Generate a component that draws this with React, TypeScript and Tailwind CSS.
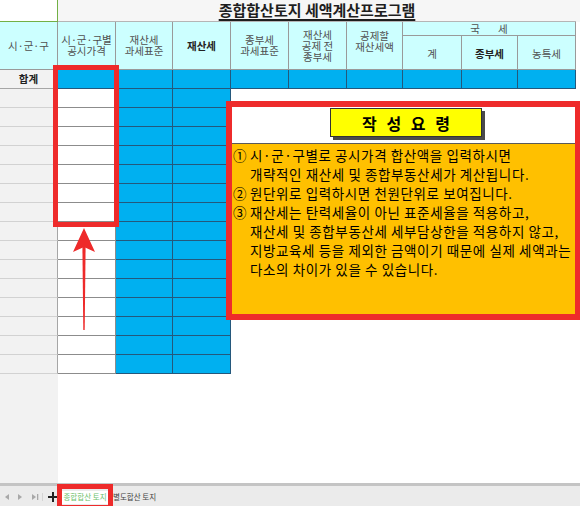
import React from "react";

// 열 너비 (A..J) — 엑셀 시트 그대로
const GRID = "grid grid-cols-[58px_58px_57px_58px_58px_58px_56px_59px_56px_58px_4px]";

const headCell =
  "flex flex-col items-center justify-center border-r border-b border-[#9a9a9a] bg-[#ccffff] text-center";

const GUIDE: [num: string, lines: string[]][] = [
  ["①", ["시·군·구별로 공시가격 합산액을 입력하시면", "개략적인 재산세 및 종합부동산세가 계산됩니다."]],
  ["②", ["원단위로 입력하시면 천원단위로 보여집니다."]],
  [
    "③",
    [
      "재산세는 탄력세율이 아닌 표준세율을 적용하고,",
      "재산세 및 종합부동산세 세부담상한을 적용하지 않고,",
      "지방교육세 등을 제외한 금액이기 때문에 실제 세액과는",
      "다소의 차이가 있을 수 있습니다.",
    ],
  ],
];

/** 시트 머리글 (2단) */
function SheetHeader() {
  return (
    <div className={`${GRID} grid-rows-[14px_34px] text-[10.5px] leading-[11px] text-[#505050]`}>
      <div className={`${headCell} row-span-2 bg-[#c7f1f1]`}>시·군·구</div>
      <div className={`${headCell} row-span-2 pb-[2px]`}>
        <span>시·군·구별</span>
        <span>공시가격</span>
      </div>
      <div className={`${headCell} row-span-2 pb-[2px]`}>
        <span>재산세</span>
        <span>과세표준</span>
      </div>
      <div className={`${headCell} row-span-2 font-bold text-[#222]`}>재산세</div>
      <div className={`${headCell} row-span-2 pb-[2px]`}>
        <span>종부세</span>
        <span>과세표준</span>
      </div>
      <div className={`${headCell} row-span-2`}>
        <span>재산세</span>
        <span>공제 전</span>
        <span>종부세</span>
      </div>
      <div className={`${headCell} row-span-2 justify-start pt-[8px]`}>
        <span>공제할</span>
        <span>재산세액</span>
      </div>
      <div className={`${headCell} col-span-3 flex-row gap-[18px]`}>
        <span>국</span>
        <span>세</span>
      </div>
      <div className="row-span-2" />
      <div className={`${headCell} pt-[2px]`}>계</div>
      <div className={`${headCell} pt-[2px] font-bold text-[#222]`}>종부세</div>
      <div className={`${headCell} pt-[2px]`}>농특세</div>
    </div>
  );
}

function SumRow() {
  return (
    <div className={`${GRID} h-[19px]`}>
      <div className="flex items-center justify-center border-r border-b border-[#a6a6a6] bg-[#f2f2f2] text-[10.5px] font-bold text-[#222]">
        합계
      </div>
      {Array.from({ length: 9 }, (_, i) => (
        <div key={i} className="border-r border-b border-[#24587c] bg-[#00b0f0]" />
      ))}
      <div />
    </div>
  );
}

function DataRow() {
  return (
    <div className={`${GRID} h-[19px]`}>
      <div className="border-r border-b border-r-[#a6a6a6] border-b-[#d2d2d2] bg-[#f2f2f2]" />
      <div className="border-r border-b border-[#8c8c8c] bg-white" />
      <div className="border-r border-b border-[#24587c] bg-[#00b0f0]" />
      <div className="border-r border-b border-[#24587c] bg-[#00b0f0]" />
    </div>
  );
}

/** 작성요령 안내 상자 */
function GuideBox() {
  return (
    <div className="absolute left-[226px] top-[101px] flex h-[219px] w-[355px] flex-col border-[6px] border-[#ee2b2b]">
      <div className="flex h-[36px] shrink-0 justify-center bg-white pl-[5px] pt-[1px]">
        <div className="flex h-[29px] w-[152px] items-center justify-center border border-[#333] bg-[#ffff00] pl-[3px] text-[16px] font-bold tracking-[3px] text-black shadow-[3px_3px_0_#4a4a4a]">
          작 성 요 령
        </div>
      </div>
      <div className="flex-1 border-t border-[#5a5a5a] bg-[#ffc000] pl-[1px] pt-[2px] text-[13.5px] leading-[19px] tracking-[0.6px] text-black">
        {GUIDE.map(([num, lines]) =>
          lines.map((line, i) => (
            <div key={num + i} className="flex whitespace-nowrap">
              <span className="w-[17px] shrink-0 tracking-normal">{i === 0 ? num : ""}</span>
              <span>{line}</span>
            </div>
          )),
        )}
      </div>
    </div>
  );
}

function RedArrow() {
  return (
    <svg className="absolute left-[70px] top-[225px]" width="30" height="110" viewBox="0 0 30 110">
      <polygon points="14,3 25,27 14,22 3,27" fill="#ee2a2a" />
      <polygon points="12.4,22 15.6,22 14.7,105 13.3,105" fill="#ee2a2a" />
    </svg>
  );
}

function TabBar() {
  return (
    <div className="flex h-[20px] items-center bg-[#ebebeb] pt-[2px] text-[7.5px] leading-none">
      <svg width="42" height="10" viewBox="0 0 42 10" className="ml-[2px]">
        <polygon points="7,2 7,8 3,5" fill="#a8a8a8" />
        <polygon points="16,2 16,8 20,5" fill="#a8a8a8" />
        <polygon points="30,2 30,8 34,5" fill="#a8a8a8" />
        <rect x="35" y="2" width="1.3" height="6" fill="#a8a8a8" />
        <rect x="40" y="1" width="0.8" height="8" fill="#cfcfcf" />
      </svg>
      <svg width="12" height="12" viewBox="0 0 12 12" className="ml-[3px]">
        <rect x="5" y="1" width="2" height="10" fill="#222" />
        <rect x="1" y="5" width="10" height="2" fill="#222" />
      </svg>
      <div className="ml-[3px] flex h-[13px] w-[46px] items-center justify-center bg-white text-[#6cbf6c]">
        종합합산 토지
      </div>
      <div className="ml-[5px] text-[#444]">별도합산 토지</div>
    </div>
  );
}

export default function App() {
  return (
    <div className="relative h-[506px] w-[580px] overflow-hidden bg-white font-['Noto_Sans_CJK_KR',sans-serif]">
      <div className="flex h-[483px] flex-col">
        {/* 제목 행 */}
        <div className="flex h-[22px] shrink-0">
          <div className="w-[58px] border-r border-b border-[#72b045] bg-white" />
          <div className="flex w-[518px] items-end justify-center border-b border-[#b5b5b5] bg-[#f6f6f6] pb-[4px]">
            <span className="text-[15px] font-bold leading-none text-[#1e1e1e] underline decoration-[1.5px] underline-offset-[3px]">
              종합합산토지 세액계산프로그램
            </span>
          </div>
          <div className="flex-1 bg-[#f6f6f6]" />
        </div>

        <SheetHeader />
        <SumRow />
        {Array.from({ length: 15 }, (_, i) => (
          <DataRow key={i} />
        ))}
        <div className="flex flex-1">
          <div className="w-[58px] bg-[#f2f2f2]" />
        </div>
      </div>

      <div className="h-[3px] bg-[#c4c4c4]" />
      <TabBar />

      {/* 강조 표시 */}
      <div className="absolute left-[53px] top-[65px] h-[162px] w-[66px] border-[5px] border-[#ee2b2b]" />
      <RedArrow />
      <GuideBox />
      <div className="absolute left-[57px] top-[484px] h-[26px] w-[56px] border-[5px] border-[#ee2b2b]" />
    </div>
  );
}
